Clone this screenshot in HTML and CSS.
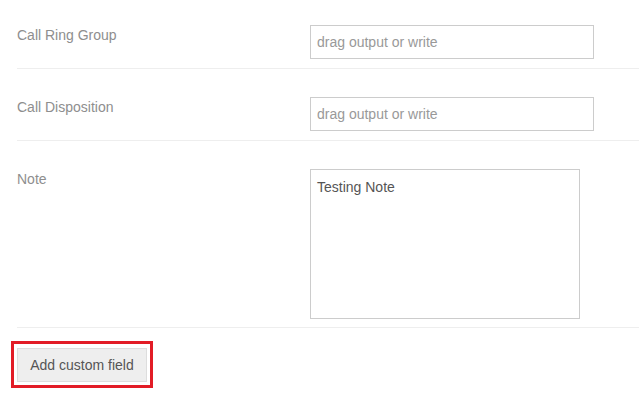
FILE: index.html
```html
<!DOCTYPE html>
<html lang="en">
<head>
    <meta charset="UTF-8">
    <title>Custom fields</title>
    <link rel="stylesheet" href="styles.css">
</head>
<body>
    <form class="field-form">
        <div class="field-row">
            <label class="field-label">Call Ring Group</label>
            <input class="field-input" type="text" placeholder="drag output or write">
        </div>
        <div class="field-row">
            <label class="field-label">Call Disposition</label>
            <input class="field-input" type="text" placeholder="drag output or write">
        </div>
        <div class="field-row">
            <label class="field-label">Note</label>
            <textarea class="field-textarea">Testing Note</textarea>
        </div>
        <div class="form-actions">
            <span class="highlight">
                <button type="button" class="btn">Add custom field</button>
            </span>
        </div>
    </form>
</body>
</html>
```

FILE: styles.css
```css
* {
    margin: 0;
    padding: 0;
    box-sizing: border-box;
}

body {
    font-family: "Liberation Sans", Arial, sans-serif;
    font-size: 14px;
    background: #ffffff;
    color: #555555;
}

.field-form {
    padding-left: 17px;
}

.field-row {
    display: grid;
    grid-template-columns: 293px 1fr;
    align-items: start;
    padding: 28px 0 9px;
    border-bottom: 1px solid #eeeeee;
}

.field-row:first-child {
    padding-top: 25px;
}

.field-label {
    color: #8e8e8e;
    line-height: 20px;
}

.field-input,
.field-textarea {
    display: block;
    font-family: inherit;
    font-size: 14px;
    color: #555555;
    border: 1px solid #cccccc;
    background: #ffffff;
    padding: 6px;
    outline: none;
}

.field-input {
    width: 284px;
    height: 34px;
}

.field-input::placeholder {
    color: #999999;
}

.field-textarea {
    width: 270px;
    height: 150px;
    padding-top: 8px;
    line-height: 18px;
    resize: none;
}

.field-row:nth-child(3) {
    padding-bottom: 8px;
}

.form-actions {
    margin-left: -6px;
    padding-top: 13px;
}

/* red annotation box round the button */
.highlight {
    display: inline-block;
    border: 3px solid #e21c26;
    padding: 4px 3px 3px;
}

.btn {
    display: block;
    width: 130px;
    height: 34px;
    font-family: inherit;
    font-size: 14px;
    color: #555555;
    background: #eeeeee;
    border: 1px solid #dddddd;
    cursor: pointer;
}
```
